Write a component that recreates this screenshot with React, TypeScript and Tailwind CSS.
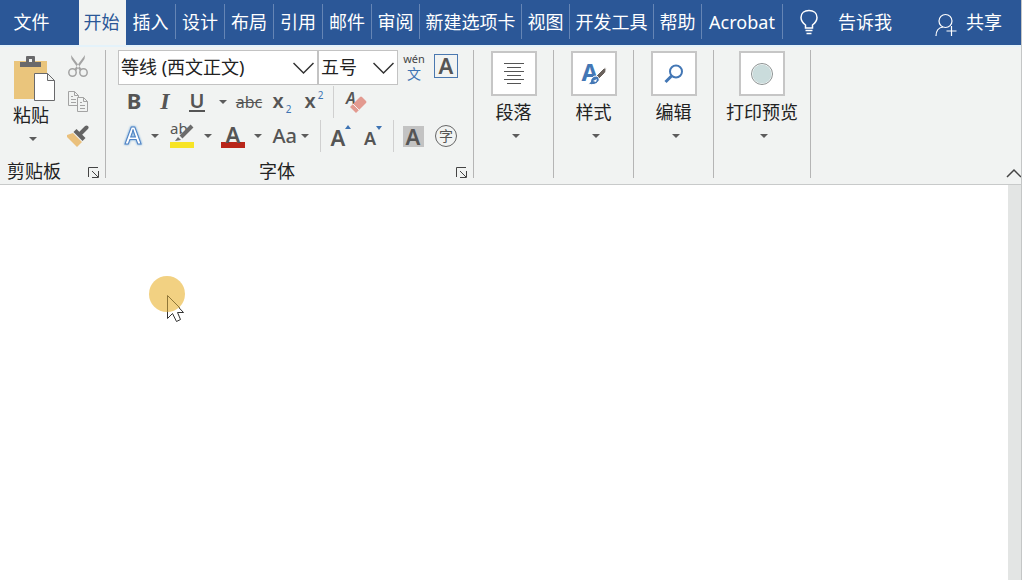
import type { ReactNode } from "react";
import clsx from "clsx";

const tabs = [
  { name: "插入", width: "w-[50px]" },
  { name: "设计", width: "w-[49px]" },
  { name: "布局", width: "w-[49px]" },
  { name: "引用", width: "w-[49px]" },
  { name: "邮件", width: "w-[49px]" },
  { name: "审阅", width: "w-12" },
  { name: "新建选项卡", width: "w-[102px]" },
  { name: "视图", width: "w-12" },
  { name: "开发工具", width: "w-[84px]" },
  { name: "帮助", width: "w-12" },
  { name: "Acrobat", width: "w-[81px]" },
];

function Caret() {
  return (
    <svg width="8" height="4" viewBox="0 0 8 4" fill="#5c5c5c">
      <path d="M0 0h8L4 4z" />
    </svg>
  );
}

function Tool({ label, className, children }: { label: string; className?: string; children: ReactNode }) {
  return (
    <button
      type="button"
      aria-label={label}
      className={clsx("flex h-[34px] shrink-0 items-center justify-center text-[#555]", className)}>
      {children}
    </button>
  );
}

function Launcher({ label }: { label: string }) {
  return (
    <button type="button" aria-label={label} className="shrink-0 pt-0.5">
      <svg width="11" height="11" viewBox="0 0 11 11" fill="none" stroke="#444">
        <path d="M.5 10V.5H10M4 4l6 6M10.5 4v6.5H4" />
      </svg>
    </button>
  );
}

function Combo({ label, value, className }: { label: string; value: string; className: string }) {
  return (
    <div className={clsx("relative h-[35px]", className)}>
      <select
        aria-label={label}
        className="size-full appearance-none border border-[#c3c3c3] bg-white pb-0.5 pl-0.5 text-lg text-[#222]">
        <option>{value}</option>
      </select>
      <svg
        className="pointer-events-none absolute top-3 right-1"
        width="21"
        height="13"
        viewBox="0 0 21 13"
        fill="none"
        stroke="#333"
        strokeWidth="1.5">
        <path d="M.5 1l10 10 10-10" />
      </svg>
    </div>
  );
}

function Clipboard() {
  return (
    <section className="flex w-[106px] flex-col border-r border-[#b5b5b5]">
      <div className="flex h-[103px] shrink-0">
        <button type="button" className="flex w-[66px] flex-col items-start pt-1.5 pl-3">
          <svg className="ml-0.5" width="42" height="47" viewBox="0 0 42 47">
            <path fill="#eac57c" d="M0 5h33v38H0z" />
            <path fill="#69696b" d="M6 11V6h6V1q0-1 1-1h7q1 0 1 1v5h6v5z" />
            <path fill="#f1f3f2" d="M15 3h3v3h-3z" />
            <path fill="#fff" stroke="#69696b" d="M20.500 17.500h13l7 7v20h-20zM33.500 17.500v7h7" />
          </svg>
          <span className="ml-px text-lg leading-6 text-[#222]">粘贴</span>
          <span className="mt-2.5 ml-[17px]">
            <Caret />
          </span>
        </button>
        <div className="flex flex-col items-center gap-2 pt-1">
          <button type="button" aria-label="剪切">
            <svg width="22" height="24" viewBox="0 0 22 24" fill="none" stroke="#a3a3a3" strokeWidth="1.5">
              <path fill="#a3a3a3" stroke="none" d="M4 1l10.500 14-1.500 2L4.500 5zM18 1L7.500 15 9 17l8.500-12z" />
              <circle cx="5.500" cy="18.500" r="3.700" />
              <circle cx="16.500" cy="18.500" r="3.700" />
            </svg>
          </button>
          <button type="button" aria-label="复制" className="mt-1">
            <svg width="22" height="23" viewBox="0 0 22 23" fill="#f1f3f2" stroke="#a3a3a3">
              <path d="M1.500 1.500h6l4 4v10h-10zM7.500 1.500v4h4M4 6.500h2M4 9.500h5M4 12.500h5" />
              <path d="M10.500 7.500h6l4 4v10h-10zM16.500 7.500v4h4M13 12.500h2M13 15.500h5M13 18.500h5" />
            </svg>
          </button>
          <button type="button" aria-label="格式刷" className="mt-1">
            <svg width="24" height="22" viewBox="0 0 24 22">
              <path fill="#eac07c" d="M1 10l6-2 9 9-5 5L1 12z" />
              <path fill="#646464" d="M7.500 7l3-3 9 9-3 3z" />
              <path stroke="#646464" strokeWidth="4" strokeLinecap="round" d="M15 8l5.500-5.500" />
            </svg>
          </button>
        </div>
      </div>
      <div className="mt-1.5 flex h-6 shrink-0 items-center justify-between pr-1.5 pl-[7px]">
        <h2 className="text-lg leading-6 text-[#222]">剪贴板</h2>
        <Launcher label="剪贴板选项" />
      </div>
    </section>
  );
}

function FontGroup() {
  return (
    <section className="w-[368px] border-r border-[#b5b5b5] pl-3">
      <div className="flex items-start">
        <Combo label="字体名称" value="等线 (西文正文)" className="w-[200px]" />
        <Combo label="字号" value="五号" className="w-20" />
        <Tool label="拼音指南" className="w-8 flex-col pb-0.5">
          <span className="text-[11px] leading-[15px] text-[#444]">wén</span>
          <span className="text-sm leading-4 text-[#3e73b3]">文</span>
        </Tool>
        <Tool label="字符边框" className="ml-1">
          <span className="mb-0.5 flex size-6 items-center justify-center border border-[#4a78b0] pb-0.5 text-[22px] leading-5 font-semibold">
            A
          </span>
        </Tool>
      </div>
      <div className="flex items-center">
        <Tool label="加粗" className="w-8 pb-1 text-[22px] font-bold">B</Tool>
        <Tool label="倾斜" className="w-[30px] pb-0.5 font-[Liberation_Serif] text-2xl font-semibold italic">I</Tool>
        <Tool label="下划线" className="w-[34px]">
          <span className="h-5 w-4 border-b-2 border-[#555] text-xl leading-[18px] font-semibold">U</span>
        </Tool>
        <Tool label="下划线样式" className="w-[18px]"><Caret /></Tool>
        <Tool label="删除线" className="w-[34px] text-base line-through">abc</Tool>
        <Tool label="下标" className="w-8 pb-0.5 text-xl font-semibold">
          x<span className="mt-4 ml-0.5 text-[10px] font-normal text-[#3e73b3]">2</span>
        </Tool>
        <Tool label="上标" className="w-8 pb-0.5 text-xl font-semibold">
          x<span className="mb-3 ml-0.5 text-[10px] font-normal text-[#3e73b3]">2</span>
        </Tool>
        <div className="ml-[3px] h-8 w-px bg-[#d0d0d0]" />
        <Tool label="清除格式" className="w-11">
          <span className="relative h-6 w-5">
            <span className="absolute top-0 left-0 text-base leading-4 font-semibold italic">A</span>
            <svg className="absolute top-1.5 left-1" width="17" height="17" viewBox="0 0 17 17">
              <path fill="#e39a90" d="M0 11L10 1q1-1 2 0l4 4q1 1 0 2L6 17z" />
              <path stroke="#f1f3f2" d="M3 8l6 6" />
            </svg>
          </span>
        </Tool>
      </div>
      <div className="flex items-center">
        <Tool label="文本效果" className="w-[30px] pb-0.5">
          <span className="text-2xl leading-6 font-semibold text-white [-webkit-text-stroke:1px_#4f82c4] drop-shadow-[0_0_1px_#5b9bd5]">
            A
          </span>
        </Tool>
        <Tool label="文本效果选项" className="w-3.5"><Caret /></Tool>
        <Tool label="突出显示" className="w-10">
          <span className="relative h-6 w-6 border-b-[6px] border-[#f7e426]">
            <span className="absolute -top-1 left-0 text-[15px] leading-4">ab</span>
            <svg className="absolute top-0 left-1" width="20" height="17" viewBox="0 0 20 17">
              <path stroke="#6b6b6b" strokeWidth="4" d="M7 13L18 2" />
              <path fill="#6b6b6b" d="M1 17l3-4 3 3z" />
            </svg>
          </span>
        </Tool>
        <Tool label="突出显示颜色" className="w-[11px]"><Caret /></Tool>
        <Tool label="字体颜色" className="w-10">
          <span className="h-6 w-6 border-b-[6px] border-[#b9261a] text-[22px] leading-5 font-semibold">A</span>
        </Tool>
        <Tool label="更多字体颜色" className="w-2.5"><Caret /></Tool>
        <Tool label="更改大小写" className="w-9 justify-end pr-0.5 text-xl font-medium">Aa</Tool>
        <Tool label="大小写选项" className="w-3"><Caret /></Tool>
        <div className="ml-[9px] h-8 w-px bg-[#d0d0d0]" />
        <Tool label="增大字号" className="w-10 pt-0.5 text-[22px] font-semibold">
          A
          <svg className="mb-5" width="6" height="4" viewBox="0 0 6 4" fill="#3e73b3"><path d="M0 4l3-4 3 4z" /></svg>
        </Tool>
        <Tool label="减小字号" className="w-6 pt-1 text-lg font-semibold">
          A
          <svg className="mb-5" width="6" height="4" viewBox="0 0 6 4" fill="#3e73b3"><path d="M0 0h6L3 4z" /></svg>
        </Tool>
        <div className="ml-2 h-8 w-px bg-[#d0d0d0]" />
        <Tool label="字符底纹" className="w-[38px]">
          <span className="h-[21px] w-[21px] bg-[#c3c3c3] text-[22px] leading-5 font-semibold">A</span>
        </Tool>
        <Tool label="带圈字符" className="w-7">
          <span className="flex size-[22px] items-center justify-center rounded-full border border-[#666] text-sm leading-5">
            字
          </span>
        </Tool>
      </div>
      <div className="mt-1.5 flex h-6 items-center pr-1.5">
        <h2 className="grow pr-5 text-center text-lg leading-6 text-[#222]">字体</h2>
        <Launcher label="字体选项" />
      </div>
    </section>
  );
}

function GroupButton({ name, className, children }: { name: string; className: string; children: ReactNode }) {
  return (
    <section className={clsx("flex justify-center border-r border-[#b5b5b5]", className)}>
      <button type="button" className="flex flex-col items-center self-start pt-px">
        <span className="flex h-[45px] w-[46px] items-center justify-center border-2 border-[#c6c6c6] bg-white">
          {children}
        </span>
        <span className="mt-1 mb-2 text-lg leading-6 text-[#222]">{name}</span>
        <span className="ml-1 flex h-4 items-start pt-0.5"><Caret /></span>
      </button>
    </section>
  );
}

function Header() {
  return (
    <header className="flex h-[45px] items-stretch bg-[#2b5797] text-lg leading-6 text-white">
      <button type="button" className="w-[79px] shrink-0 pr-4 pb-0.5">文件</button>
      <button type="button" className="w-[47px] shrink-0 bg-[#f1f3f2] pr-0.5 pb-0.5 text-[#2b5797]">开始</button>
      <nav className="flex items-center">
        {tabs.map((tab) => (
          <button
            key={tab.name}
            type="button"
            className={clsx("mb-0.5 flex h-[35px] shrink-0 items-center justify-center border-r border-[#6585b5] whitespace-nowrap", tab.width)}>
            {tab.name}
          </button>
        ))}
      </nav>
      <button type="button" className="ml-[15px] flex shrink-0 items-center gap-[18px] pb-0.5">
        <svg width="22" height="26" viewBox="0 0 22 26" fill="none" stroke="#fff" strokeWidth="1.5">
          <path d="M7.500 19v-3Q3 12.500 3 8.500C3 4 6.500 1.500 11 1.500s8 2.500 8 7q0 4-4.500 7.500v3zM7.500 21.500h7M8.500 24.500h5" />
        </svg>
        告诉我
      </button>
      <button type="button" className="mr-[19px] ml-auto flex shrink-0 items-center gap-2 pb-0.5">
        <svg className="mt-1.5" width="23" height="24" viewBox="0 0 23 24" fill="none" stroke="#fff" strokeWidth="1.200">
          <circle cx="10.500" cy="8" r="6.500" />
          <path d="M1 23q0-8 7-9M16.500 13v10M11.500 18h10" />
        </svg>
        共享
      </button>
    </header>
  );
}

export default function App() {
  return (
    <div className="flex min-h-screen flex-col overflow-hidden border-r border-[#c4c6c6] bg-white font-['Noto_Sans','Noto_Sans_CJK_SC',sans-serif]">
      <Header />
      <div className="relative flex h-[140px] border-t-2 border-b border-t-[#e4f2fa] border-b-[#c8caca] bg-[#f1f3f2] pt-[3px] pb-1.5">
        <Clipboard />
        <FontGroup />
        <GroupButton name="段落" className="w-20">
          <svg width="20" height="22" viewBox="0 0 20 22" stroke="#555">
            <path d="M0 .5h20M3 4.500h14M0 8.500h20M3 12.500h14M0 16.500h20M3 20.500h14" />
          </svg>
        </GroupButton>
        <GroupButton name="样式" className="w-20">
          <span className="relative h-6 w-6 text-left">
            <span className="absolute top-0 left-0 text-2xl leading-5 font-bold text-[#4377b5]">A</span>
            <svg className="absolute top-1 left-1.5" width="19" height="19" viewBox="0 0 19 19">
              <path fill="#6a625d" stroke="#fff" d="M8 10l8-8q3-1 2 2 0 2-1 3l-6 6z" />
              <path fill="#4377b5" stroke="#fff" d="M0 18q3-1 3-5 3-4 6-3 4 3 1 6-3 4-10 2z" />
              <path fill="#fff" d="M5 15l4-2-1 3z" />
            </svg>
          </span>
        </GroupButton>
        <GroupButton name="编辑" className="w-20">
          <svg width="20" height="20" viewBox="0 0 20 20" fill="none" stroke="#4377b5">
            <circle cx="12" cy="7.500" r="6" strokeWidth="2" />
            <path strokeWidth="3" d="M7.500 12L1.500 18" />
          </svg>
        </GroupButton>
        <GroupButton name="打印预览" className="w-[97px]">
          <svg width="22" height="22" viewBox="0 0 22 22">
            <circle cx="11" cy="11" r="10.500" fill="#fff" stroke="#8b9191" />
            <circle cx="11" cy="11" r="9.500" fill="#cadcdc" />
          </svg>
        </GroupButton>
        <button type="button" aria-label="折叠功能区" className="mt-auto -mr-px ml-auto">
          <svg width="16" height="10" viewBox="0 0 16 10" fill="none" stroke="#444" strokeWidth="1.500">
            <path d="M1 9l7-7 7 7" />
          </svg>
        </button>
      </div>
      <main className="relative flex grow">
        <svg className="absolute top-[91px] left-[149px]" width="38" height="48" viewBox="0 0 38 48">
          <path fill="#fff" stroke="#333" d="M18.500 19.500v23l5-5 4 8 4-2-3-7h6z" />
          <circle cx="18" cy="18" r="18" fill="#f2d182" />
          <path fill="none" stroke="#8f7637" d="M18.500 36V19.500L31 32" />
        </svg>
        <div className="ml-auto w-[13px] bg-[#e3e5e4]" />
      </main>
    </div>
  );
}
